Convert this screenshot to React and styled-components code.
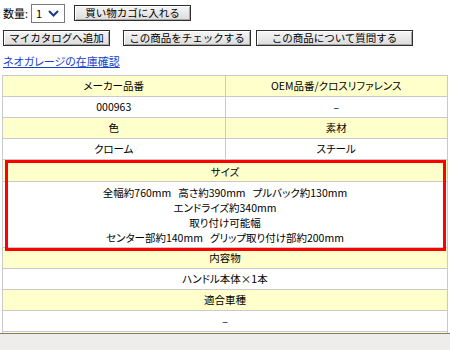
import React from 'react';
import styled, { createGlobalStyle } from 'styled-components';

const GlobalStyle = createGlobalStyle`
  html, body {
    margin: 0;
    padding: 0;
    background: #fff;
  }
  body {
    font-family: "Noto Sans CJK JP", "Noto Sans", sans-serif;
    font-size: 10.5px;
    color: #000;
    font-feature-settings: "palt";
  }
`;

const Frame = styled.div`
  width: 450px;
  height: 350px;
  display: flex;
  flex-direction: column;
  overflow: hidden;
`;

const Viewport = styled.div`
  height: 333px;
  flex: 0 0 333px;
  overflow: hidden;
`;

const StatusBar = styled.div`
  flex: 1;
  border-top: 1px solid #7c7c7c;
  background: #efedeb;
`;

const Controls = styled.div`
  padding-left: 3px;
`;

const Row = styled.div`
  display: flex;
  align-items: center;
  height: ${({ $h }) => $h || 16}px;
  margin-top: ${({ $mt }) => $mt || 0}px;
`;

const Label = styled.span`
  font-size: 11px;
  line-height: 14px;
  margin-right: 3px;
`;

const Select = styled.div`
  box-sizing: border-box;
  width: 34px;
  height: 19px;
  border: 1px solid #7a7a7a;
  display: flex;
  align-items: center;
  justify-content: space-between;
  padding: 0 5px 0 4px;
  background: #fff;
  font-size: 11px;

  svg {
    display: block;
  }
`;

const Button = styled.button`
  box-sizing: border-box;
  width: ${({ $w }) => $w}px;
  height: 16px;
  margin: 0 0 0 ${({ $ml }) => $ml || 0}px;
  padding: 0;
  font-family: inherit;
  font-size: 10.5px;
  line-height: 14px;
  color: #000;
  border: 1px solid #2e2e2e;
  background: linear-gradient(#f6f6f6, #dcdcdc);
  box-shadow: inset 1px 1px #fff, inset -1px -1px #a8a8a8;
  cursor: pointer;
`;

const StockLink = styled.a`
  display: block;
  margin-top: 8px;
  font-size: 11px;
  line-height: 14px;
  color: #1a3fcc;
  text-decoration: underline;
  width: max-content;
`;

const Table = styled.div`
  margin: 7px 2px 0 2px;
  border: 1px solid #c9c9c9;
  border-bottom: none;
`;

const TableRow = styled.div`
  display: flex;
  border-bottom: 1px solid #c9c9c9;
  background: ${({ $head }) => ($head ? '#ffffcc' : '#fff')};
`;

const Cell = styled.div`
  flex: 1 1 0;
  text-align: center;
  line-height: ${({ $lh }) => $lh || 20}px;
  padding: ${({ $pad }) => $pad || '0'};
  white-space: pre;

  & + & {
    border-left: 1px solid #c9c9c9;
  }
`;

const SizeBlock = styled.div`
  position: relative;

  &::after {
    content: '';
    position: absolute;
    top: 0;
    left: 2px;
    right: 1px;
    bottom: -3px;
    border: 3px solid #ff0000;
    pointer-events: none;
  }
`;

const Chevron = () => (
  <svg width="11" height="7" viewBox="0 0 11 7">
    <path d="M1 1 L5.5 5.5 L10 1" fill="none" stroke="#1e3a8a" strokeWidth="2" />
  </svg>
);

const pairs = [
  { head: ['メーカー品番', 'OEM品番/クロスリファレンス'], body: ['000963', '–'] },
  { head: ['色', '素材'], body: ['クローム', 'スチール'] },
];

const sizeLines = [
  '全幅約760mm   高さ約390mm   プルバック約130mm',
  'エンドライズ約340mm',
  '取り付け可能幅',
  'センター部約140mm   グリップ取り付け部約200mm',
];

const singles = [
  { head: '内容物', body: 'ハンドル本体×1本' },
  { head: '適合車種', body: '–' },
  { head: '注意事項', body: '' },
];

export default function App() {
  return (
    <Frame>
      <GlobalStyle />
      <Viewport>
        <Controls>
          <Row $h={26}>
            <Label>数量:</Label>
            <Select>
              <span>1</span>
              <Chevron />
            </Select>
            <Button $w={117} $ml={9}>買い物カゴに入れる</Button>
          </Row>
          <Row $mt={4}>
            <Button $w={107}>マイカタログへ追加</Button>
            <Button $w={128} $ml={13}>この商品をチェックする</Button>
            <Button $w={157} $ml={5}>この商品について質問する</Button>
          </Row>
          <StockLink href="#">ネオガレージの在庫確認</StockLink>
        </Controls>

        <Table>
          {pairs.map((p) => (
            <React.Fragment key={p.head[0]}>
              <TableRow $head>
                <Cell>{p.head[0]}</Cell>
                <Cell>{p.head[1]}</Cell>
              </TableRow>
              <TableRow>
                <Cell>{p.body[0]}</Cell>
                <Cell>{p.body[1]}</Cell>
              </TableRow>
            </React.Fragment>
          ))}

          <SizeBlock>
            <TableRow $head>
              <Cell $lh={19} $pad="2px 0 0">サイズ</Cell>
            </TableRow>
            <TableRow>
              <Cell $lh={15} $pad="3px 0 2px">
                {sizeLines.join('\n')}
              </Cell>
            </TableRow>
          </SizeBlock>

          {singles.map((s) => (
            <React.Fragment key={s.head}>
              <TableRow $head>
                <Cell>{s.head}</Cell>
              </TableRow>
              <TableRow>
                <Cell>{s.body}</Cell>
              </TableRow>
            </React.Fragment>
          ))}
        </Table>
      </Viewport>
      <StatusBar />
    </Frame>
  );
}
